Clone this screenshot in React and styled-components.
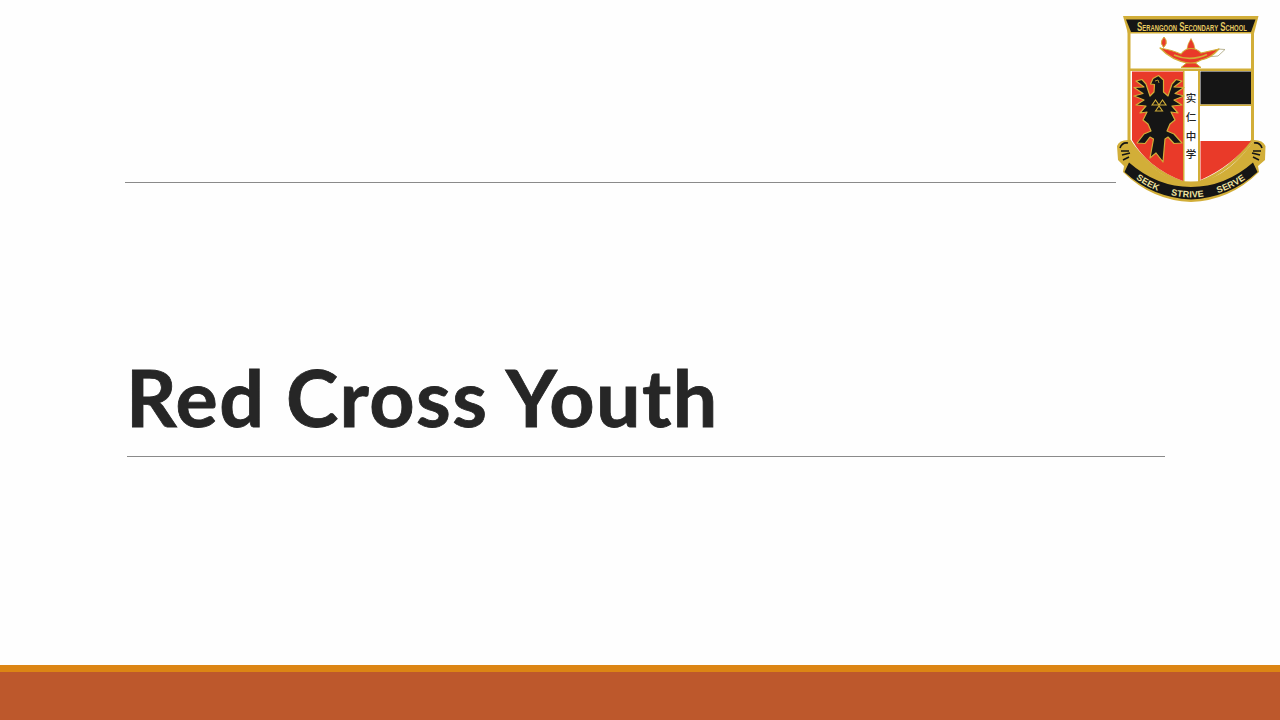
import React from "react";
import styled, { createGlobalStyle } from "styled-components";

const Global = createGlobalStyle`
  html, body { margin: 0; padding: 0; background: #fff; }
  #root { width: 1280px; height: 720px; overflow: hidden; }
`;

const Slide = styled.main`
  position: relative;
  width: 1280px;
  height: 720px;
  display: flex;
  flex-direction: column;
  background: #fefefe;
  overflow: hidden;
`;
const Header = styled.header`
  height: 183px;
  box-sizing: border-box;
  padding-left: 125px;
  display: flex;
  align-items: flex-end;
`;
const Rule = styled.hr`
  margin: 0;
  border: 0;
  height: 1px;
  width: ${(p) => p.$width}px;
  background: #8a8a8a;
`;
const TitleBlock = styled.section`
  flex: 1;
  padding-left: 127px;
  display: flex;
  flex-direction: column;
  align-items: flex-start;
  justify-content: flex-start;
`;
const Title = styled.h1`
  margin: 164px 0 0 -1px;
  height: 109px;
  font-family: "Lato", "Liberation Sans", sans-serif;
  font-weight: 700;
  font-size: 79px;
  line-height: 100px;
  letter-spacing: 1.4px;
  -webkit-text-stroke: 0.8px #262626;
  color: #262626;
  white-space: nowrap;
`;
const Footer = styled.footer`
  height: 55px;
  box-sizing: border-box;
  border-top: 7px solid #dc8514;
  background: #bd582c;
`;
const LogoWrap = styled.div`
  position: absolute;
  left: 1105px;
  top: 5px;
  width: 175px;
  height: 205px;
`;
const SchoolText = styled.text`
  font-family: "Liberation Sans", sans-serif;
  font-weight: 700;
  font-size: 12.500px;
  font-variant: small-caps;
  fill: #e6cb62;
`;
const MottoText = styled.text`
  font-family: "Liberation Sans", sans-serif;
  font-weight: 700;
  font-size: 9px;
  letter-spacing: 0.2px;
  fill: #efe3a0;
`;
const ChineseText = styled.text`
  font-family: "Noto Sans CJK SC", sans-serif;
  font-weight: 500;
  font-size: 10.500px;
  fill: #222;
  text-anchor: middle;
`;

const GOLD = "#d2ae38";
const RED = "#e93a29";
const INK = "#151515";

const EAGLE =
  "M1158.500 75.500 L1153 78.500 L1150.500 84 L1154.500 84.500 L1154 92 L1150 96 L1146 84 L1142 79.500 L1136 81 L1144 87 L1134 87.500 L1143 93.500 L1134 96 L1144 100 L1136 105 L1146 106 L1140 113 L1147 112 L1143 120 L1148 124 L1151 131 L1144 134 L1137 143 L1145 143.500 L1150 137 L1153.500 139 L1150 158 L1156 153 L1163 162 L1165 139 L1168 137 L1174 143.500 L1182 143 L1174 134 L1167 131 L1170 124 L1175 120 L1171 112 L1178 113 L1172 106 L1182 105 L1174 100 L1184 96 L1175 93.500 L1184 87.500 L1174 87 L1182 81 L1176 79.500 L1172 84 L1168 96 L1163.500 92 L1163.500 80 Z";

function Crest() {
  return (
    <svg width="175" height="205" viewBox="1105 5 175 205" role="img" aria-label="School crest">
      <defs>
        <path id="motto" d="M1126 171 Q1156 197 1191 197.500 Q1226 197 1256 171" fill="none" />
      </defs>

      {/* shield */}
      <path d="M1129 30 H1252.500 V140 Q1232 170 1198 183 H1184 Q1148 170 1129 140 Z" fill="#fff" stroke={GOLD} strokeWidth="3" />
      <rect x="1130" y="68.500" width="122" height="2.500" fill={GOLD} />
      <path d="M1132 71.500 H1183 V181 Q1148 168 1132 140 Z" fill={RED} />
      <rect x="1183" y="71" width="1.500" height="111" fill={GOLD} />
      <rect x="1198" y="71" width="2" height="111" fill={GOLD} />
      <rect x="1200.500" y="71.500" width="50.500" height="33" fill={INK} />
      <rect x="1200" y="104.500" width="51" height="1.500" fill={GOLD} />
      <path d="M1200.500 141 H1251 Q1232 166 1200.500 180 Z" fill={RED} />

      {/* top banner */}
      <path d="M1123 16 H1258.500 L1254 33.500 H1128 Z" fill={GOLD} />
      <path d="M1126 19.500 H1255.500 L1251 32 H1131 Z" fill={INK} />
      <g transform="translate(1137 30.500) scale(0.7 1)">
        <SchoolText x="0" y="0" textLength="157" lengthAdjust="spacingAndGlyphs">
          Serangoon Secondary School
        </SchoolText>
      </g>

      {/* lamp */}
      <path d="M1218 49 L1225 49.500 L1218 56 L1206 57" fill="#fff" stroke="#a9a27a" strokeWidth="0.800" />
      <path d="M1163.500 47.500 Q1160 43 1162 40 L1164 37 L1166 40 Q1167.500 44 1163.500 47.500 Z" fill={RED} stroke={GOLD} strokeWidth="1" />
      <path d="M1191 38.500 Q1187.500 44 1187 49 H1195 Q1194.500 44 1191 38.500 Z" fill={RED} stroke={GOLD} strokeWidth="0.700" />
      <path d="M1160 48 Q1172 50 1181 54 Q1185 48.500 1191 48.500 Q1197 48.500 1201 53 L1219 49 Q1211 58 1201 60 Q1195 63.500 1190 63.500 Q1172 61 1160 48 Z" fill={RED} stroke={GOLD} strokeWidth="1.200" strokeLinejoin="round" />
      <path d="M1174 55 Q1190 62 1207 54.500" fill="none" stroke={GOLD} strokeWidth="1.600" />
      <path d="M1186.500 63 H1195.500 L1201 67.500 H1181 Z" fill={RED} stroke={GOLD} strokeWidth="1" />

      {/* eagle */}
      <path d={EAGLE} fill={INK} stroke={GOLD} strokeWidth="1.200" strokeLinejoin="round" />
      <path d="M1152 105 L1155.500 100 L1159 105 Z M1159 105 L1162.500 100 L1166 105 Z M1155.500 111 L1159 106 L1162.500 111 Z" fill="none" stroke={GOLD} strokeWidth="1.100" />
      <path d="M1155 81 L1158 80 L1159 83" fill="none" stroke={GOLD} strokeWidth="0.800" />

      {/* characters */}
      <ChineseText x="1191" y="102">实</ChineseText>
      <ChineseText x="1191" y="121">仁</ChineseText>
      <ChineseText x="1191" y="140">中</ChineseText>
      <ChineseText x="1191" y="158">学</ChineseText>

      {/* ribbon */}
      <path
        d="M1117 146 Q1119 140 1128 140 L1133 147 Q1160 182 1191 182 Q1222 182 1249 147 L1254 140 Q1263 140 1265.500 146 L1265 160 L1258 166 L1259 172 Q1230 200.500 1191 202 Q1152 200.500 1123 172 L1124 166 L1118 160 Z"
        fill={GOLD}
      />
      <path d="M1129 162.500 L1124.500 172 Q1152 197.500 1191 199.500 Q1230 197.500 1257.500 172 L1253 162.500 Q1225 187 1191 187 Q1157 187 1129 162.500 Z" fill={INK} />
      <path d="M1120 148 Q1122 142 1128 143 M1121 151 H1129 M1122 155 L1130 153 M1123 160 L1129 157 M1262 148 Q1260 142 1254 143 M1261 151 H1253 M1260 155 L1252 153 M1259 160 L1253 157" fill="none" stroke={INK} strokeWidth="1.600" />

      <MottoText>
        <textPath href="#motto" startOffset="17.500%" textAnchor="middle">SEEK</textPath>
      </MottoText>
      <MottoText>
        <textPath href="#motto" startOffset="47.500%" textAnchor="middle">STRIVE</textPath>
      </MottoText>
      <MottoText>
        <textPath href="#motto" startOffset="80%" textAnchor="middle">SERVE</textPath>
      </MottoText>
    </svg>
  );
}

export default function App() {
  return (
    <>
      <Global />
      <Slide>
        <Header>
          <Rule $width={991} />
        </Header>
        <TitleBlock>
          <Title>Red Cross Youth</Title>
          <Rule $width={1038} />
        </TitleBlock>
        <Footer />
        <LogoWrap>
          <Crest />
        </LogoWrap>
      </Slide>
    </>
  );
}
